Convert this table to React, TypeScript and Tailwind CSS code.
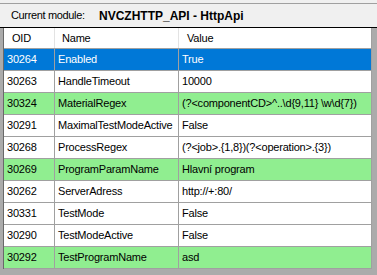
import React from "react";

type Row = { oid: string; name: string; value: string; tone?: "sel" | "hi" };

const rows: Row[] = [
  { oid: "30264", name: "Enabled", value: "True", tone: "sel" },
  { oid: "30263", name: "HandleTimeout", value: "10000" },
  { oid: "30324", name: "MaterialRegex", value: "(?<componentCD>^..\\d{9,11} \\w\\d{7})", tone: "hi" },
  { oid: "30291", name: "MaximalTestModeActive", value: "False" },
  { oid: "30268", name: "ProcessRegex", value: "(?<job>.{1,8})(?<operation>.{3})" },
  { oid: "30269", name: "ProgramParamName", value: "Hlavní program", tone: "hi" },
  { oid: "30262", name: "ServerAdress", value: "http://+:80/" },
  { oid: "30331", name: "TestMode", value: "False" },
  { oid: "30290", name: "TestModeActive", value: "False" },
  { oid: "30292", name: "TestProgramName", value: "asd", tone: "hi" },
];

const App = () => {
  return (
    <div className="w-[377px] h-[275px] overflow-hidden bg-[#ababab] font-['Liberation_Sans',Arial,sans-serif] text-[11px] tracking-[-0.2px] text-black">
      <div className="h-[3px] bg-[#f0f0f0]" />
      <div className="h-[25px] flex items-center bg-[#f0f0f0] border-t border-t-[#a0a0a0] border-b border-b-black pl-[11px]">
        <span className="w-[88px] tracking-[-0.35px]">Current module:</span>
        <span className="font-bold text-[12px] tracking-normal">NVCZHTTP_API - HttpApi</span>
      </div>
      <div className="flex">
        <div className="w-[3px] shrink-0" />
        <div className="w-[369px] border-l border-[#696969]">
          <div className="grid grid-cols-[51px_124px_193px] h-[21px] bg-white border-b border-[#a0a0a0]">
            <div className="flex items-center pl-[8px] border-r border-[#e3e3e3]">OID</div>
            <div className="flex items-center pl-[7px] border-r border-[#e3e3e3]">Name</div>
            <div className="flex items-center pl-[8px] border-r border-[#a0a0a0]">Value</div>
          </div>
          {rows.map((r) => {
            const bg =
              r.tone === "sel" ? "bg-[#0078d7] text-white" : r.tone === "hi" ? "bg-[#90ee90]" : "bg-white";
            return (
              <div key={r.oid} className={`grid grid-cols-[51px_124px_193px] h-[22px] border-b border-[#a0a0a0] ${bg}`}>
                <div className="flex items-center pl-[3px] border-r border-[#a0a0a0]">{r.oid}</div>
                <div className="flex items-center pl-[3px] border-r border-[#a0a0a0] whitespace-nowrap">{r.name}</div>
                <div className="flex items-center pl-[3px] border-r border-[#a0a0a0] whitespace-nowrap overflow-hidden">{r.value}</div>
              </div>
            );
          })}
        </div>
      </div>
    </div>
  );
};

export default App;
